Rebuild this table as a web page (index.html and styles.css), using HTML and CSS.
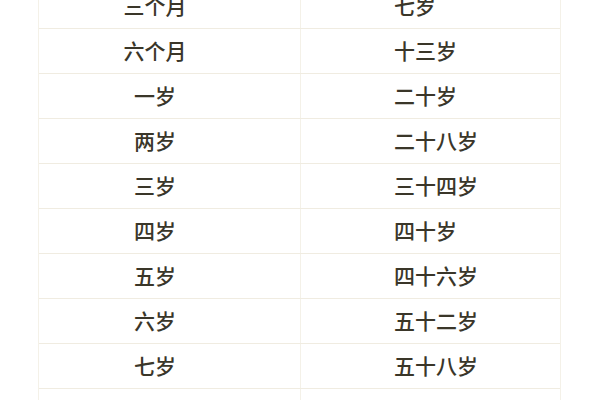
FILE: index.html
```html
<!DOCTYPE html>
<html lang="zh">
<head>
<meta charset="utf-8">
<link rel="stylesheet" href="styles.css">
</head>
<body>
<div class="table">
  <div class="row"><div class="c1">三个月</div><div class="c2">七岁</div></div>
  <div class="row"><div class="c1">六个月</div><div class="c2">十三岁</div></div>
  <div class="row"><div class="c1">一岁</div><div class="c2">二十岁</div></div>
  <div class="row"><div class="c1">两岁</div><div class="c2">二十八岁</div></div>
  <div class="row"><div class="c1">三岁</div><div class="c2">三十四岁</div></div>
  <div class="row"><div class="c1">四岁</div><div class="c2">四十岁</div></div>
  <div class="row"><div class="c1">五岁</div><div class="c2">四十六岁</div></div>
  <div class="row"><div class="c1">六岁</div><div class="c2">五十二岁</div></div>
  <div class="row"><div class="c1">七岁</div><div class="c2">五十八岁</div></div>
  <div class="row"><div class="c1">八岁</div><div class="c2">六十四岁</div></div>
</div>
</body>
</html>
```
FILE: styles.css
```css
html, body {
  margin: 0;
  padding: 0;
  background: #ffffff;
  overflow: hidden;
}
body {
  font-family: "Noto Sans CJK SC", "Noto Sans", sans-serif;
  color: #3a3629;
}
.table {
  margin: -16px 0 0 38px;
  width: 523px;
  box-sizing: border-box;
  border-left: 1px solid #f4f1e8;
  border-right: 1px solid #f4f1e8;
}
.row {
  display: grid;
  grid-template-columns: 262px 259px;
  height: 45px;
  box-sizing: border-box;
  border-bottom: 1px solid #f0ece1;
}
.c1, .c2 {
  display: flex;
  align-items: center;
  font-size: 21px;
  font-weight: 500;
  line-height: 1;
  padding-bottom: 2px;
}
.c1 {
  justify-content: center;
  padding-right: 29px;
  border-right: 1px solid #f4f1e8;
}
.c2 {
  padding-left: 93px;
}
```
